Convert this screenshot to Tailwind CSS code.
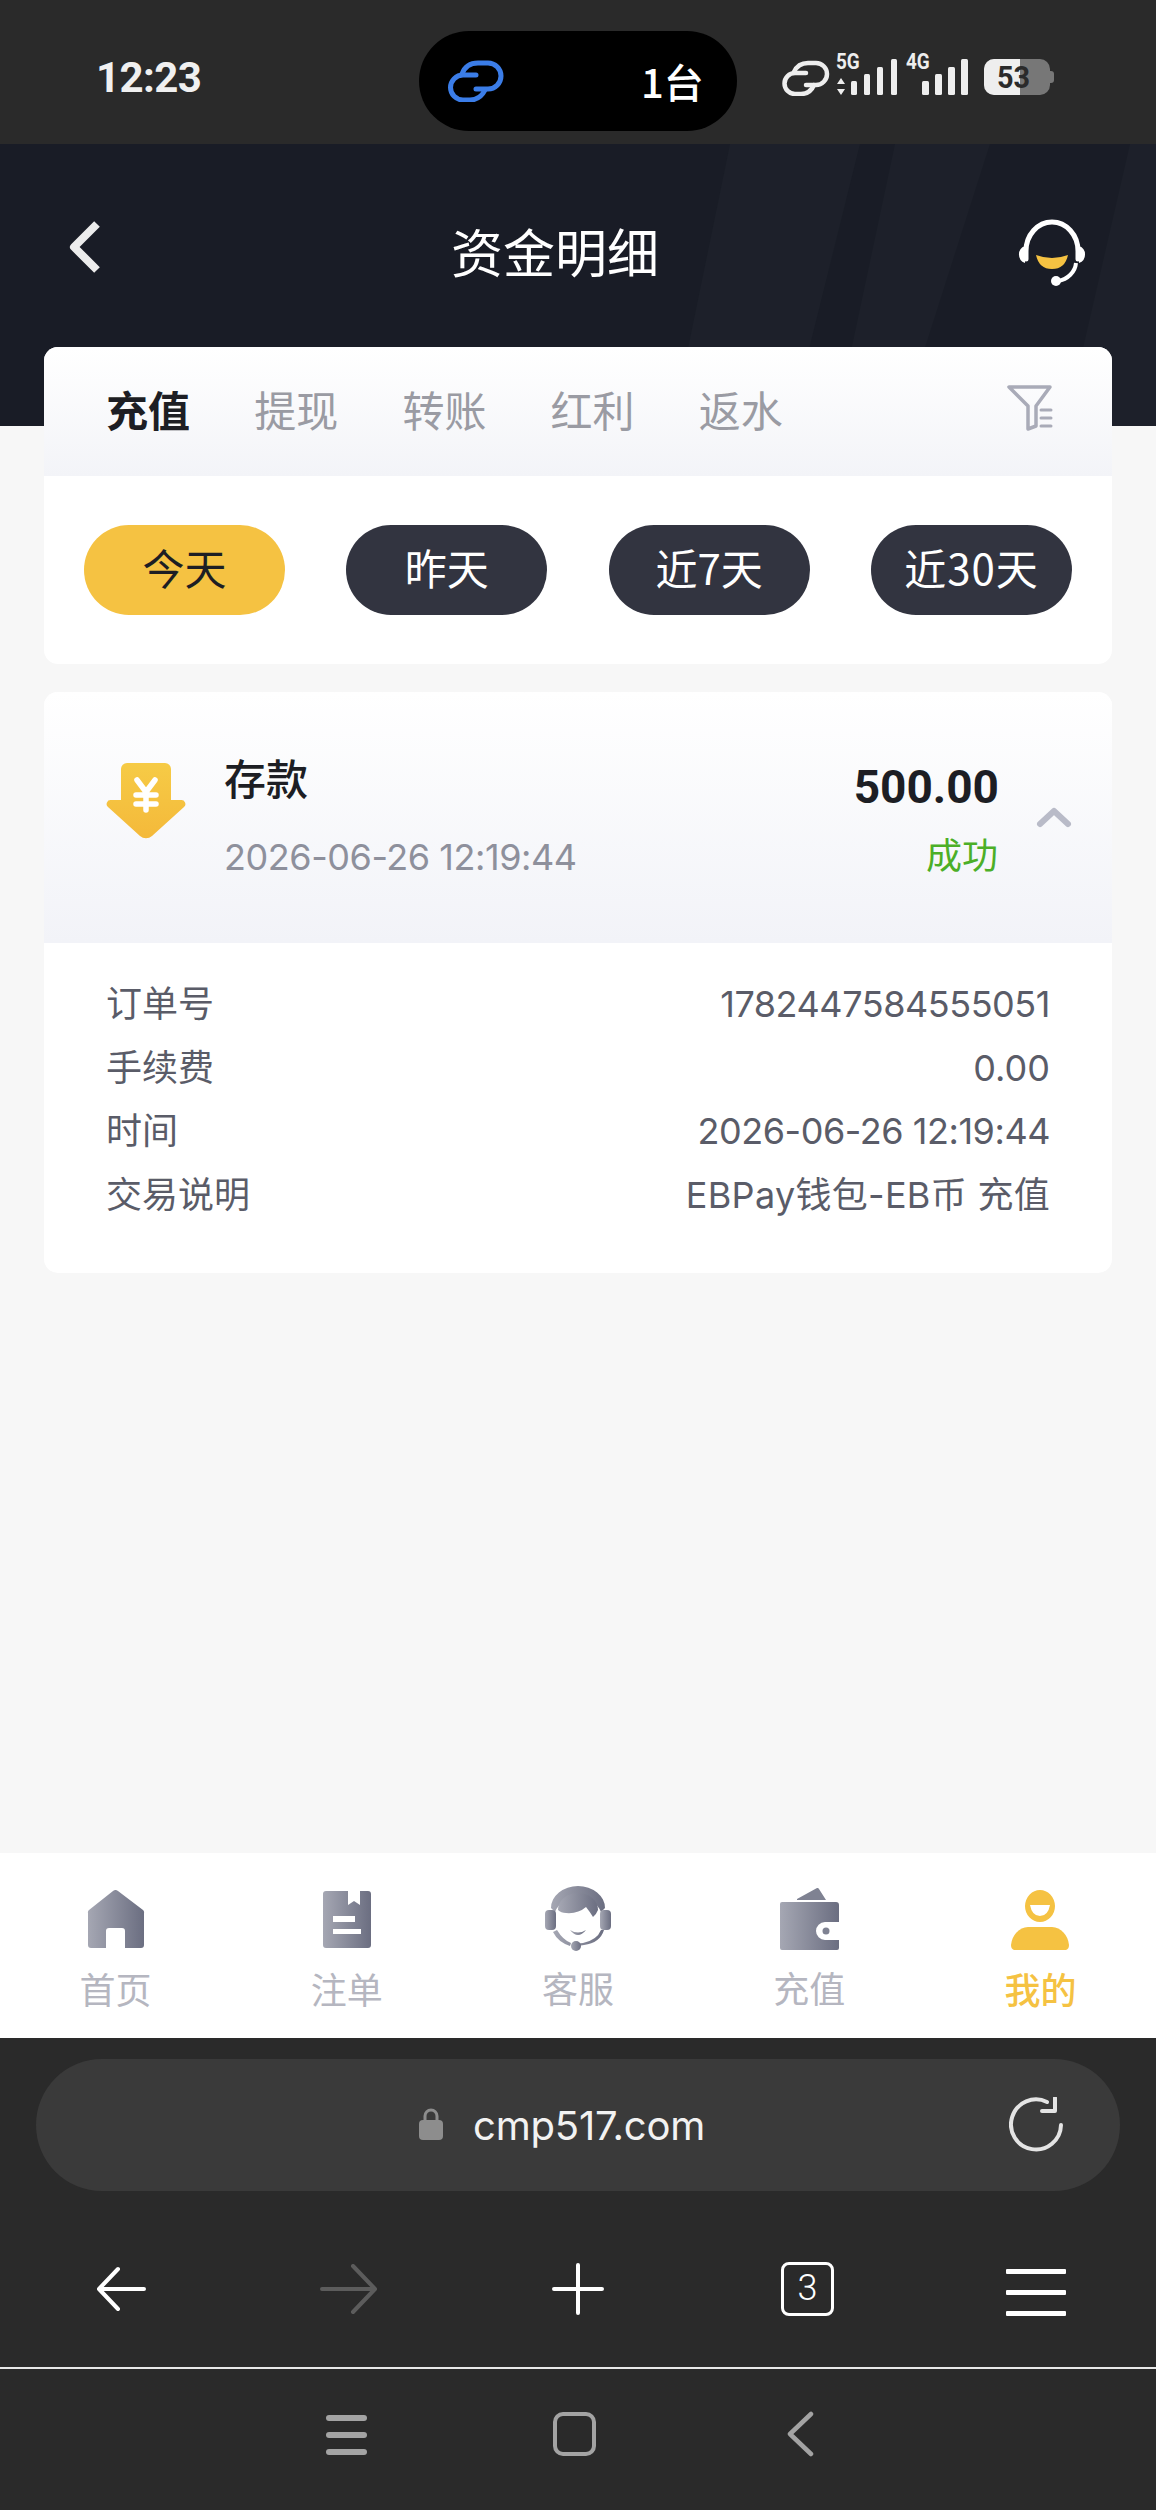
<!DOCTYPE html>
<html>
<head>
<meta charset="utf-8">
<title>资金明细</title>
<script src="https://cdn.jsdelivr.net/npm/@tailwindcss/browser@4"></script>
</head>
<body class="bg-[#2a2a2a]">
<div class="w-[1156px] h-[2510px] flex flex-col overflow-hidden font-['Inter','Noto_Sans_CJK_SC',sans-serif]">

  <!-- status bar -->
  <div class="h-[144px] shrink-0 bg-[#2a2a2a] flex items-start relative">
    <span class="absolute left-[96px] top-[53px] text-[42px] leading-[50px] font-bold text-[#f0f0f0] font-['Roboto',sans-serif] tracking-[-0.6px]">12:23</span>
    <div class="absolute left-[419px] top-[31px] w-[318px] h-[100px] rounded-full bg-black">
      <svg class="absolute left-[29px] top-[29px]" width="56" height="42" viewBox="0 0 56 42" fill="none" stroke="#3b7de8" stroke-width="5" stroke-linecap="round">
        <path d="M28 15 H15 a12.500 12.500 0 0 0 0 25 H22 Q32 40 37 30"/>
        <path d="M14 14 Q18 3 30 3 H40 a13 13 0 0 1 0 26 H28"/>
      </svg>
      <span class="absolute left-[222px] top-[24px] text-[40px] leading-[52px] font-medium text-white font-['Noto_Sans_CJK_SC',sans-serif]">1台</span>
    </div>
    <svg class="absolute left-[782px] top-[60px]" width="48" height="36" viewBox="0 0 48 36" fill="none" stroke="#eeeeee" stroke-width="4.500" stroke-linecap="round">
      <path d="M24 13 H13 a10.500 10.500 0 0 0 0 21 H19 Q28 34 32 25"/>
      <path d="M12 12 Q16 3 26 3 H34 a11 11 0 0 1 0 22 H24"/>
    </svg>
    <span class="absolute left-[836px] top-[50px] text-[22px] leading-[24px] font-bold text-[#eeeeee] font-['Roboto',sans-serif] scale-x-[.86] origin-left">5G</span>
    <svg class="absolute left-[836px] top-[58px]" width="66" height="38" viewBox="0 0 66 38" fill="#eeeeee">
      <path d="M5 20 l4 6 h-8z M5 37 l4-6 h-8z"/>
      <rect x="15" y="23" width="6" height="14" rx="1.500"/>
      <rect x="28" y="16" width="6" height="21" rx="1.500"/>
      <rect x="41" y="9" width="6" height="28" rx="1.500"/>
      <rect x="55" y="1" width="6" height="36" rx="1.500"/>
    </svg>
    <span class="absolute left-[906px] top-[50px] text-[22px] leading-[24px] font-bold text-[#eeeeee] font-['Roboto',sans-serif] scale-x-[.86] origin-left">4G</span>
    <svg class="absolute left-[920px] top-[58px]" width="50" height="38" viewBox="0 0 50 38" fill="#eeeeee">
      <rect x="2" y="23" width="7" height="14" rx="1.500"/>
      <rect x="15" y="16" width="7" height="21" rx="1.500"/>
      <rect x="28" y="9" width="7" height="28" rx="1.500"/>
      <rect x="41" y="1" width="7" height="36" rx="1.500"/>
    </svg>
    <div class="absolute left-[984px] top-[59px] w-[66px] h-[36px] rounded-[10px] bg-[#777777] overflow-hidden">
      <div class="w-[36px] h-full bg-[#eeeeee]"></div>
    </div>
    <div class="absolute left-[1050px] top-[71px] w-[4px] h-[12px] rounded-r-[3px] bg-[#777777]"></div>
    <span class="absolute left-[997px] top-[59px] text-[32px] leading-[36px] font-bold text-[#2a2a2a] font-['Roboto',sans-serif] scale-x-[.9] origin-left">53</span>
  </div>

  <!-- page header -->
  <div class="h-[282px] shrink-0 bg-[#191c26] relative overflow-hidden">
    <svg class="absolute left-0 top-0" width="1156" height="282" viewBox="0 0 1156 282">
      <polygon points="730,0 860,0 790,282 672,282" fill="#1d202a"/>
      <polygon points="895,0 990,0 900,282 835,282" fill="#1d202a"/>
      <polygon points="1130,0 1156,0 1156,282 1065,282" fill="#1d202a"/>
    </svg>
    <svg class="absolute left-[68px] top-[76px]" width="34" height="54" viewBox="0 0 34 54" fill="none" stroke="#ececec" stroke-width="8" stroke-linejoin="round">
      <path d="M29 4 L6 27 L29 50"/>
    </svg>
    <span class="absolute left-0 right-0 top-[71px] pr-[46px] text-center text-[52px] leading-[72px] text-white font-['Noto_Sans_CJK_SC',sans-serif]">资金明细</span>
    <svg class="absolute left-[1014px] top-[75px]" width="76" height="70" viewBox="0 0 76 70" fill="none">
      <path d="M12 40 V32 a26 29 0 0 1 52 0 V40" stroke="#fff" stroke-width="5" stroke-linecap="round"/>
      <path d="M11 27 a9 9 0 0 0 0 17z M65 27 a9 9 0 0 1 0 17z" fill="#fff"/>
      <path d="M62 44 a22 20 0 0 1-18 18" stroke="#fff" stroke-width="4"/>
      <circle cx="42" cy="62" r="5" fill="#fff"/>
      <path d="M22 36 q16 6 32 0 q-3 14-16 14 q-13 0-16-14z" fill="#f5c242"/>
    </svg>
  </div>

  <!-- content -->
  <div class="h-[1427px] shrink-0 bg-[#f7f7f7] px-[44px] flex flex-col">
    <div class="-mt-[79px] relative bg-white rounded-[14px] overflow-hidden h-[317px] shrink-0">
      <div class="h-[129px] bg-gradient-to-b from-white to-[#f3f4f8] flex items-start pl-[62px] pt-[37px] text-[42px] leading-[50px] text-[#9a9ba3] gap-[64.200px] relative font-['Noto_Sans_CJK_SC',sans-serif]">
        <span class="font-bold text-[#1d1e24]">充值</span>
        <span>提现</span>
        <span>转账</span>
        <span>红利</span>
        <span>返水</span>
        <svg class="absolute left-[963px] top-[38px]" width="46" height="46" viewBox="0 0 46 46" fill="none" stroke="#a9abb8" stroke-width="3.500" stroke-linejoin="round" stroke-linecap="round">
          <path d="M2 2 H43 L29 21 V41 L21 44 V21 Z"/>
          <path d="M34 25 H44 M34 33 H44 M34 41 H44" stroke-width="3"/>
        </svg>
      </div>
      <div class="flex justify-between pl-[40px] pr-[40px] pt-[49px] text-[42px] leading-[84px] text-center font-['Noto_Sans_CJK_SC',sans-serif]">
        <span class="w-[201px] h-[90px] rounded-full bg-[#f5c242] text-[#1d1e24]">今天</span>
        <span class="w-[201px] h-[90px] rounded-full bg-[#323440] text-white">昨天</span>
        <span class="w-[201px] h-[90px] rounded-full bg-[#323440] text-white">近7天</span>
        <span class="w-[201px] h-[90px] rounded-full bg-[#323440] text-white tracking-[1px]">近30天</span>
      </div>
    </div>

    <div class="mt-[28px] bg-white rounded-[14px] overflow-hidden h-[581px] shrink-0">
      <div class="h-[251px] bg-gradient-to-b from-white to-[#f2f3f8] flex items-center relative">
        <svg class="absolute left-[62px] top-[71px]" width="80" height="76" viewBox="0 0 80 76">
          <defs><linearGradient id="arrowFill" x1="0" y1="0" x2="0" y2="1"><stop offset="0" stop-color="#f6cb46"/><stop offset="1" stop-color="#f4b93a"/></linearGradient></defs>
          <path d="M21 0 H59 a6 6 0 0 1 6 6 V37 H75 a4 4 0 0 1 3 7 L46 73 a9 9 0 0 1-12 0 L2 44 a4 4 0 0 1 3-7 H15 V6 a6 6 0 0 1 6-6z" fill="url(#arrowFill)"/>
          <path d="M31 17 L40 29 L49 17 M30 32 H50 M30 41 H50 M40 29 V47" fill="none" stroke="#fff" stroke-width="5.500" stroke-linecap="round" stroke-linejoin="round"/>
        </svg>
        <span class="absolute left-[180px] top-[60px] text-[42px] leading-[50px] font-medium text-[#1d1e24] font-['Noto_Sans_CJK_SC',sans-serif]">存款</span>
        <span class="absolute left-[180px] top-[141px] text-[36px] leading-[48px] text-[#8e909c] tracking-[-0.45px]">2026-06-26 12:19:44</span>
        <span class="absolute right-[113px] top-[67px] text-[46px] leading-[56px] font-bold text-[#1d1e24] font-['Roboto',sans-serif]">500.00</span>
        <span class="absolute right-[114px] top-[137px] text-[36px] leading-[48px] text-[#4caf27] font-['Noto_Sans_CJK_SC',sans-serif]">成功</span>
        <svg class="absolute left-[992px] top-[113px]" width="36" height="24" viewBox="0 0 36 24" fill="none" stroke="#b9bbc8" stroke-width="6" stroke-linecap="round" stroke-linejoin="round">
          <path d="M4 19 L18 6 L32 19"/>
        </svg>
      </div>
      <div class="px-[62px] pt-[30px] flex flex-col text-[36px] leading-[63.500px] text-[#5a5c68]">
        <div class="flex justify-between"><span>订单号</span><span class="tracking-[-0.45px]">1782447584555051</span></div>
        <div class="flex justify-between"><span>手续费</span><span>0.00</span></div>
        <div class="flex justify-between"><span>时间</span><span class="tracking-[-0.45px]">2026-06-26 12:19:44</span></div>
        <div class="flex justify-between"><span>交易说明</span><span class="tracking-[0.3px]">EBPay钱包-EB币 充值</span></div>
      </div>
    </div>
  </div>

  <!-- bottom tabs -->
  <div class="h-[185px] shrink-0 bg-white grid grid-cols-5 text-[36px] leading-[44px] text-[#b5b6c0] font-['Noto_Sans_CJK_SC',sans-serif]">
    <div class="flex flex-col items-center">
      <svg class="mt-[37px]" width="58" height="60" viewBox="0 0 58 60">
        <defs><linearGradient id="navA"><stop offset="0" stop-color="#a5a7b3"/><stop offset="1" stop-color="#6b6e81"/></linearGradient></defs>
        <path fill-rule="evenodd" d="M26 1 a4 4 0 0 1 5 0 L56 20 a3 3 0 0 1 1 3 V55 a3 3 0 0 1-3 3 H38 V41 a3 3 0 0 0-3-3 H22 a3 3 0 0 0-3 3 V58 H4 a3 3 0 0 1-3-3 V23 a3 3 0 0 1 1-3z" fill="url(#navA)"/>
      </svg>
      <span class="mt-[16px]">首页</span>
    </div>
    <div class="flex flex-col items-center">
      <svg class="mt-[37px]" width="50" height="60" viewBox="0 0 50 60">
        <defs><linearGradient id="navB"><stop offset="0" stop-color="#a5a7b3"/><stop offset="1" stop-color="#6b6e81"/></linearGradient></defs>
        <path d="M4 1 H26 V15 L32 11 L38 15 V1 H46 a3 3 0 0 1 3 3 V55 a3 3 0 0 1-3 3 H4 a3 3 0 0 1-3-3 V4 a3 3 0 0 1 3-3z" fill="url(#navB)"/>
        <rect x="11" y="26" width="22" height="6" fill="#fff"/>
        <rect x="11" y="39" width="28" height="5" fill="#fff"/>
      </svg>
      <span class="mt-[16px]">注单</span>
    </div>
    <div class="flex flex-col items-center">
      <svg class="mt-[33px]" width="66" height="66" viewBox="0 0 66 66">
        <defs><linearGradient id="navC"><stop offset="0" stop-color="#a5a7b3"/><stop offset="1" stop-color="#6b6e81"/></linearGradient></defs>
        <path d="M6 22 a27 22 0 0 1 54 0 l-4 4 a24 20 0 0 0-46 0z" fill="url(#navC)"/>
        <path d="M13 24 a20 17 0 0 1 40 0 q-2 5-5 7 q-3-5-7-10 q-8 7-20 6 q-5 0-8-3z" fill="url(#navC)"/>
        <rect x="0" y="24" width="11" height="20" rx="4" fill="url(#navC)"/>
        <rect x="55" y="24" width="11" height="20" rx="4" fill="url(#navC)"/>
        <path d="M12 44 q6 10 14 13 l-1 3 q-12-4-17-14z M59 44 q-4 13-20 15 l-12 2 v-3 l11-1 q14-3 18-13z" fill="url(#navC)"/>
        <path d="M25 44 q8 5 16 0 q-8 10-16 0z" fill="url(#navC)"/>
        <circle cx="31" cy="60" r="5" fill="url(#navC)"/>
      </svg>
      <span class="mt-[13px]">客服</span>
    </div>
    <div class="flex flex-col items-center">
      <svg class="mt-[35px]" width="60" height="64" viewBox="0 0 60 64">
        <defs><linearGradient id="navD"><stop offset="0" stop-color="#a5a7b3"/><stop offset="1" stop-color="#6b6e81"/></linearGradient></defs>
        <path d="M18 11 L38 0 a2 2 0 0 1 2 1 L47 12 H18z" fill="#7f8292"/>
        <path d="M3 16 H57 a3 3 0 0 1 3 3 V36 H46 a9 9 0 0 0 0 18 H60 V62 a2 2 0 0 1-2 2 H3 a2 2 0 0 1-2-2 V18 a2 2 0 0 1 2-2z" fill="url(#navD)" transform="translate(0 -2)"/>
        <circle cx="47" cy="43" r="3.500" fill="#7f8292"/>
      </svg>
      <span class="mt-[13px]">充值</span>
    </div>
    <div class="flex flex-col items-center text-[#f5c242] font-medium">
      <svg class="mt-[37px]" width="58" height="60" viewBox="0 0 58 60" fill="#f5c242">
        <path fill-rule="evenodd" d="M29 0 a15 17 0 0 1 15 16 a15 16 0 0 1-30 0 a15 17 0 0 1 15-16z M19 15 h20 q-2 11-10 11 q-8 0-10-11z"/>
        <path d="M17 37 H41 a18 20 0 0 1 17 18 q0 4-3 5 H3 q-3-1-3-5 a18 20 0 0 1 17-18z"/>
      </svg>
      <span class="mt-[16px]">我的</span>
    </div>
  </div>

  <!-- browser bar -->
  <div class="h-[331px] shrink-0 bg-[#2a2a2a] border-b-2 border-[#e8e8e8] flex flex-col">
    <div class="mt-[21px] mx-[36px] h-[132px] rounded-full bg-[#3a3a3a] relative flex items-center">
      <svg class="absolute left-[383px] top-[49px]" width="24" height="32" viewBox="0 0 24 32">
        <path d="M6 13 V8 a6 6 0 0 1 12 0 V13" fill="none" stroke="#8d8d8d" stroke-width="3"/>
        <rect x="0" y="12" width="24" height="20" rx="4" fill="#8d8d8d"/>
      </svg>
      <span class="absolute left-[437px] top-[41px] text-[40px] leading-[52px] text-[#f2f2f2] tracking-[-0.2px]">cmp517.com</span>
      <svg class="absolute left-[973px] top-[38px]" width="56" height="56" viewBox="0 0 56 56" fill="none" stroke="#e4e4e4" stroke-width="4" stroke-linecap="round" stroke-linejoin="round">
        <path d="M52 28 A25 25 0 1 1 38 5"/>
        <path d="M46 1 V14 H33" stroke-width="4"/>
      </svg>
    </div>
    <div class="relative h-[175px]">
      <svg class="absolute left-[96px] top-[75px]" width="50" height="46" viewBox="0 0 50 46" fill="none" stroke="#ffffff" stroke-width="4" stroke-linecap="round" stroke-linejoin="round">
        <path d="M48 23 H4 M22 3 L3 23 L22 43"/>
      </svg>
      <svg class="absolute left-[320px] top-[73px]" width="58" height="50" viewBox="0 0 58 50" fill="none" stroke="#5c5c5c" stroke-width="4" stroke-linecap="round" stroke-linejoin="round">
        <path d="M2 25 H54 M33 2 L55 25 L33 48"/>
      </svg>
      <svg class="absolute left-[552px] top-[72px]" width="52" height="52" viewBox="0 0 52 52" fill="none" stroke="#ffffff" stroke-width="4" stroke-linecap="round">
        <path d="M26 2 V50 M2 26 H50"/>
      </svg>
      <div class="absolute left-[781px] top-[71px] w-[53px] h-[54px] rounded-[8px] border-[3.5px] border-white text-white text-[36px] leading-[47px] text-center font-light font-['Roboto',sans-serif]">3</div>
      <div class="absolute left-[1006px] top-[78px] w-[60px] flex flex-col gap-[16px]">
        <div class="h-[5px] bg-white rounded-[1px]"></div>
        <div class="h-[5px] bg-white rounded-[1px]"></div>
        <div class="h-[5px] bg-white rounded-[1px]"></div>
      </div>
    </div>
  </div>

  <!-- system nav -->
  <div class="flex-1 bg-[#2a2a2a] relative">
    <div class="absolute left-[326px] top-[46px] w-[41px] flex flex-col gap-[11px]">
      <div class="h-[6px] rounded-full bg-[#a3a3a3]"></div>
      <div class="h-[6px] rounded-full bg-[#a3a3a3]"></div>
      <div class="h-[6px] rounded-full bg-[#a3a3a3]"></div>
    </div>
    <div class="absolute left-[553px] top-[43px] w-[43px] h-[44px] rounded-[10px] border-[4px] border-[#a3a3a3]"></div>
    <svg class="absolute left-[785px] top-[42px]" width="30" height="46" viewBox="0 0 30 46" fill="none" stroke="#a3a3a3" stroke-width="4.500" stroke-linecap="round" stroke-linejoin="round">
      <path d="M26 3 L5 23 L26 43"/>
    </svg>
  </div>
</div>
</body>
</html>
